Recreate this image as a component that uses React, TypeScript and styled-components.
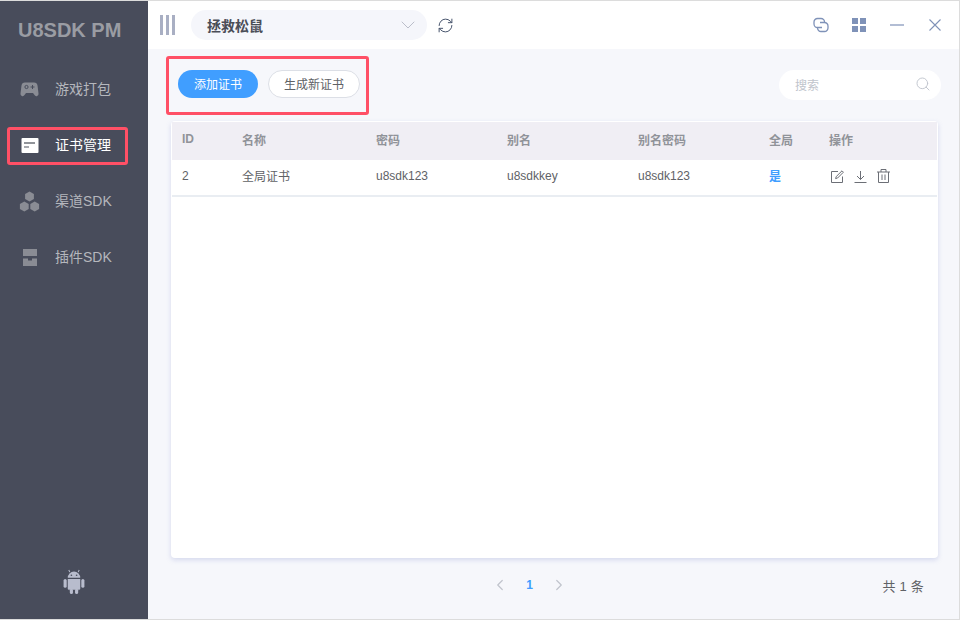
import React from "react";
import styled, { createGlobalStyle } from "styled-components";
import { ChevronDown, ChevronLeft, ChevronRight, Search, RefreshCw } from "lucide-react";

const Global = createGlobalStyle`
  html, body { margin: 0; padding: 0; background: #f5f6fb; }
  body { font-family: "Liberation Sans", "Noto Sans CJK SC", sans-serif; font-size: 12px; }
  * { box-sizing: border-box; }
`;

const Frame = styled.div`
  width: 960px; height: 620px; display: flex; overflow: hidden;
  border: 1px solid #dcdcdc; border-left: 0; background: #f6f7fb;
`;
const Sidebar = styled.aside`
  width: 148px; flex: none; display: flex; flex-direction: column; background: #484c5b; margin-top: -1px; margin-bottom: -1px;
`;
const Logo = styled.div`
  height: 60px; padding: 19px 0 0 18px; font-size: 20px; line-height: 23px; font-weight: 700; color: #9a9ca3; white-space: nowrap;
`;
const NavList = styled.nav`
  display: flex; flex-direction: column; gap: 16px; margin-top: 9px; padding-left: 7px;
`;
const NavItem = styled.div<{ $active?: boolean }>`
  width: 121px; height: 40px; display: flex; align-items: center; gap: 15px; padding-left: 12px; position: relative;
  font-size: 14px; color: ${(p) => (p.$active ? "#ffffff" : "#b5b7bd")};
`;
const NavLabel = styled.span`
  margin-top: -2px;
`;
const NavIcon = styled.svg`
  width: 21px; height: 21px; flex: none;
`;
const Highlight = styled.span<{ $top?: number }>`
  position: absolute; left: 0; top: ${(p) => p.$top ?? 0}px; right: 0; bottom: 0; border: 3px solid #ff5066; border-radius: 3px; pointer-events: none;
`;
const Bottom = styled.div`
  margin-top: auto; height: 60px; display: flex; justify-content: center; padding-top: 9px;
`;
const Main = styled.div`
  flex: 1; min-width: 0; display: flex; flex-direction: column;
`;
const Header = styled.header`
  height: 48px; flex: none; background: #fff; display: flex; align-items: center; padding: 0 18px 0 12px;
`;
const Bars = styled.div`
  display: flex; gap: 3px; margin-right: 16px;
`;
const Bar = styled.i`
  display: block; width: 3px; height: 20px; background: #a9afc3;
`;
const GameSelect = styled.div`
  width: 236px; height: 30px; border-radius: 15px; background: #f5f6fb; display: flex; align-items: center; justify-content: space-between;
  padding: 0 7px 0 16px; font-size: 14px; font-weight: 700; color: #4a4d57;
`;
const Refresh = styled.span`
  display: flex; margin-left: 10px; color: #46536b;
`;
const HeaderRight = styled.div`
  margin-left: auto; display: flex; align-items: center; color: #7f92b8;
  svg { margin-right: 24px; }
  svg:first-child { margin-right: 23px; }
  svg:nth-child(2) { margin-right: 24px; }
  svg:nth-child(3) { margin-right: 25px; }
  svg:last-child { margin-right: 0; }
`;
const Content = styled.main`
  flex: 1; min-height: 0; display: flex; flex-direction: column; padding: 7px 21px 7px 23px;
`;
const Toolbar = styled.div`
  height: 59px; flex: none; display: flex; align-items: center; justify-content: space-between; margin-left: -5px; margin-right: -3px;
`;
const ButtonGroup = styled.div`
  position: relative; width: 203px; height: 59px; display: flex; align-items: center; gap: 10px; padding: 0 0 3px 12px;
`;
const Pill = styled.button<{ $primary?: boolean }>`
  height: 28px; padding: 0 0 2px; border-radius: 14px; font: inherit; font-size: 12px; cursor: pointer;
  width: ${(p) => (p.$primary ? "80px" : "92px")};
  background: ${(p) => (p.$primary ? "#409eff" : "#fff")};
  color: ${(p) => (p.$primary ? "#fff" : "#606266")};
  border: ${(p) => (p.$primary ? "0" : "1px solid #dcdfe6")};
`;
const SearchBox = styled.div`
  width: 162px; height: 30px; margin-bottom: 2px; border-radius: 15px; background: #fff; display: flex; align-items: center; justify-content: space-between;
  padding: 0 10px 1px 16px; color: #c0c4cc;
`;
const Card = styled.section`
  height: 437px; flex: none; margin-top: 6px; padding: 1px; background: #fff; border-radius: 4px; box-shadow: 0 2px 5px rgba(130,140,210,.28); overflow: hidden;
`;
const Table = styled.table`
  width: 100%; border-collapse: collapse; table-layout: fixed;
`;
const Th = styled.th<{ $w?: number }>`
  height: 38px; padding: 0 0 4px 10px; text-align: left; font-weight: 700; font-size: 12px; color: #909399; background: #f0eef4;
  width: ${(p) => (p.$w ? `${p.$w}px` : "auto")};
`;
const Td = styled.td`
  height: 36px; padding: 0 0 4px 10px; color: #606266; font-size: 12px; border-bottom: 2px solid #e9edf2;
`;
const Yes = styled.span`
  color: #409eff; font-weight: 700;
`;
const Actions = styled.div`
  display: flex; gap: 10px; align-items: center; margin: 1px 0 0 2px; color: #6c6f76;
`;
const Pager = styled.footer`
  flex: 1; display: flex; align-items: center; position: relative; justify-content: center; padding-right: 50px; color: #c0c4cc; gap: 17px;
`;
const PageNumber = styled.span`
  color: #409eff; font-weight: 700; font-size: 12px;
`;
const Total = styled.span`
  position: absolute; right: 14px; color: #606266; font-size: 13px; letter-spacing: .2px;
`;

const columns: [string, number?][] = [["ID", 60], ["名称", 134], ["密码", 131], ["别名", 131], ["别名密码", 131], ["全局", 60], ["操作"]];

const Gamepad = () => (
  <NavIcon viewBox="0 0 21 21">
    <path fill="#8a8c94" d="M6 3.5h9a3.5 3.5 0 0 1 3.5 3l1 8a2.2 2.2 0 0 1-4 1.6L14 14H7l-1.5 2.1a2.2 2.2 0 0 1-4-1.6l1-8A3.5 3.5 0 0 1 6 3.5z" />
    <circle cx="7.5" cy="8" r="1.6" fill="none" stroke="#484c5b" strokeWidth="1" />
    <path d="M11.5 8h4M13.5 6v4" stroke="#484c5b" strokeWidth="1" />
  </NavIcon>
);
const CertIcon = () => (
  <NavIcon viewBox="0 0 21 21">
    <rect x="2.5" y="3" width="17" height="15" rx="1" fill="#fff" />
    <path d="M5 8h11" stroke="#6d7078" strokeWidth="1.5" />
    <path d="M5 12h5" stroke="#8a8c94" strokeWidth="1.5" />
  </NavIcon>
);
const Hexes = () => (
  <NavIcon viewBox="0 0 21 21">
    <g fill="#8a8c94">
      <path d="M10.5 0.5l4.4 2.5v5L10.5 10.5 6.1 8V3z" />
      <path d="M5.3 10.5l4.4 2.5v5L5.3 20.5.9 18v-5z" />
      <path d="M15.7 10.5l4.4 2.5v5l-4.4 2.5-4.4-2.5v-5z" />
    </g>
  </NavIcon>
);
const Plugin = () => (
  <NavIcon viewBox="0 0 21 21">
    <g fill="#8a8c94">
      <rect x="4" y="2" width="14" height="7" />
      <path d="M4 11.5h5v2h4v-2h5V19H4z" />
    </g>
  </NavIcon>
);
const Android = () => (
  <svg width="22" height="25" viewBox="0 0 21 24">
    <g fill="#b8bccd">
      <path d="M4.5 8.5a6 6 0 0 1 12 0z" />
      <path d="M6.5 3L5.5 1M14.5 3l1-2" stroke="#b8bccd" strokeWidth="1" />
      <path d="M4.5 9.5h12v9.5a1 1 0 0 1-1 1h-10a1 1 0 0 1-1-1z" />
      <rect x="0.5" y="9.5" width="3" height="8.5" rx="1.5" />
      <rect x="17.5" y="9.5" width="3" height="8.5" rx="1.5" />
      <rect x="6.5" y="19" width="3" height="5" rx="1.5" />
      <rect x="11.5" y="19" width="3" height="5" rx="1.5" />
    </g>
    <circle cx="8" cy="6" r=".8" fill="#484c5b" />
    <circle cx="13" cy="6" r=".8" fill="#484c5b" />
  </svg>
);
const LinkIcon = () => (
  <svg width="16" height="16" viewBox="0 0 16 16" fill="none" stroke="currentColor" strokeWidth="1.3">
    <path d="M9 10.5H4.5A3.5 3.5 0 0 1 1 7V5A3.5 3.5 0 0 1 4.5 1.5h3.5A3.5 3.5 0 0 1 11.5 5v1" />
    <path d="M7 5.5h4.5A3.5 3.5 0 0 1 15 9v2a3.5 3.5 0 0 1-3.5 3.5H8A3.5 3.5 0 0 1 4.5 11v-1" />
  </svg>
);
const Grid = () => (
  <svg width="14" height="14" viewBox="0 0 14 14" fill="#7f92b8">
    <rect x="0" y="0" width="6" height="6" />
    <rect x="8" y="0" width="6" height="6" />
    <rect x="0" y="8" width="6" height="6" />
    <rect x="8" y="8" width="6" height="6" />
  </svg>
);
const MinusLine = () => (
  <svg width="14" height="14" viewBox="0 0 14 14" stroke="currentColor" strokeWidth="1.2">
    <path d="M0 7h14" />
  </svg>
);
const CloseCross = () => (
  <svg width="12" height="12" viewBox="0 0 12 12" stroke="currentColor" strokeWidth="1.1" fill="none">
    <path d="M.5.5l11 11M11.5.5l-11 11" />
  </svg>
);
const EditIcon = () => (
  <svg width="13" height="13" viewBox="0 0 13 13" fill="none" stroke="currentColor" strokeWidth="1">
    <path d="M7 1.5H.5v11h11V6.5" />
    <path d="M11 .8L5.2 6.6l-.6 2 2-.6L12.4 2.2z" />
  </svg>
);
const DownloadIcon = () => (
  <svg width="13" height="13" viewBox="0 0 13 13" fill="none" stroke="currentColor" strokeWidth="1">
    <path d="M6.5 1v8.5M3 6l3.5 3.5L10 6M.5 12.5h12" />
  </svg>
);
const TrashIcon = () => (
  <svg width="13" height="14" viewBox="0 0 13 14" fill="none" stroke="currentColor" strokeWidth="1">
    <path d="M0 3h13M4 3V.5h5V3M1.5 3v10.5h10V3M5 5.5v5.5M8 5.5v5.5" />
  </svg>
);

export default function App() {
  return (
    <>
      <Global />
      <Frame>
        <Sidebar>
          <Logo>U8SDK PM</Logo>
          <NavList>
            <NavItem><Gamepad /><NavLabel>游戏打包</NavLabel></NavItem>
            <NavItem $active><CertIcon /><NavLabel>证书管理</NavLabel><Highlight $top={2} /></NavItem>
            <NavItem><Hexes /><NavLabel>渠道SDK</NavLabel></NavItem>
            <NavItem><Plugin /><NavLabel>插件SDK</NavLabel></NavItem>
          </NavList>
          <Bottom><Android /></Bottom>
        </Sidebar>
        <Main>
          <Header>
            <Bars><Bar /><Bar /><Bar /></Bars>
            <GameSelect>拯救松鼠<ChevronDown size={24} strokeWidth={0.9} color="#b4b8c4" /></GameSelect>
            <Refresh><RefreshCw size={17} strokeWidth={1.4} /></Refresh>
            <HeaderRight>
              <LinkIcon />
              <Grid />
              <MinusLine />
              <CloseCross />
            </HeaderRight>
          </Header>
          <Content>
            <Toolbar>
              <ButtonGroup>
                <Pill $primary>添加证书</Pill>
                <Pill>生成新证书</Pill>
                <Highlight />
              </ButtonGroup>
              <SearchBox>搜索<Search size={16} strokeWidth={1.4} /></SearchBox>
            </Toolbar>
            <Card>
              <Table>
                <thead>
                  <tr>{columns.map(([label, w]) => <Th key={label} $w={w}>{label}</Th>)}</tr>
                </thead>
                <tbody>
                  <tr>
                    <Td>2</Td>
                    <Td>全局证书</Td>
                    <Td>u8sdk123</Td>
                    <Td>u8sdkkey</Td>
                    <Td>u8sdk123</Td>
                    <Td><Yes>是</Yes></Td>
                    <Td>
                      <Actions>
                        <EditIcon />
                        <DownloadIcon />
                        <TrashIcon />
                      </Actions>
                    </Td>
                  </tr>
                </tbody>
              </Table>
            </Card>
            <Pager>
              <ChevronLeft size={18} strokeWidth={1.6} />
              <PageNumber>1</PageNumber>
              <ChevronRight size={18} strokeWidth={1.6} />
              <Total>共 1 条</Total>
            </Pager>
          </Content>
        </Main>
      </Frame>
    </>
  );
}
